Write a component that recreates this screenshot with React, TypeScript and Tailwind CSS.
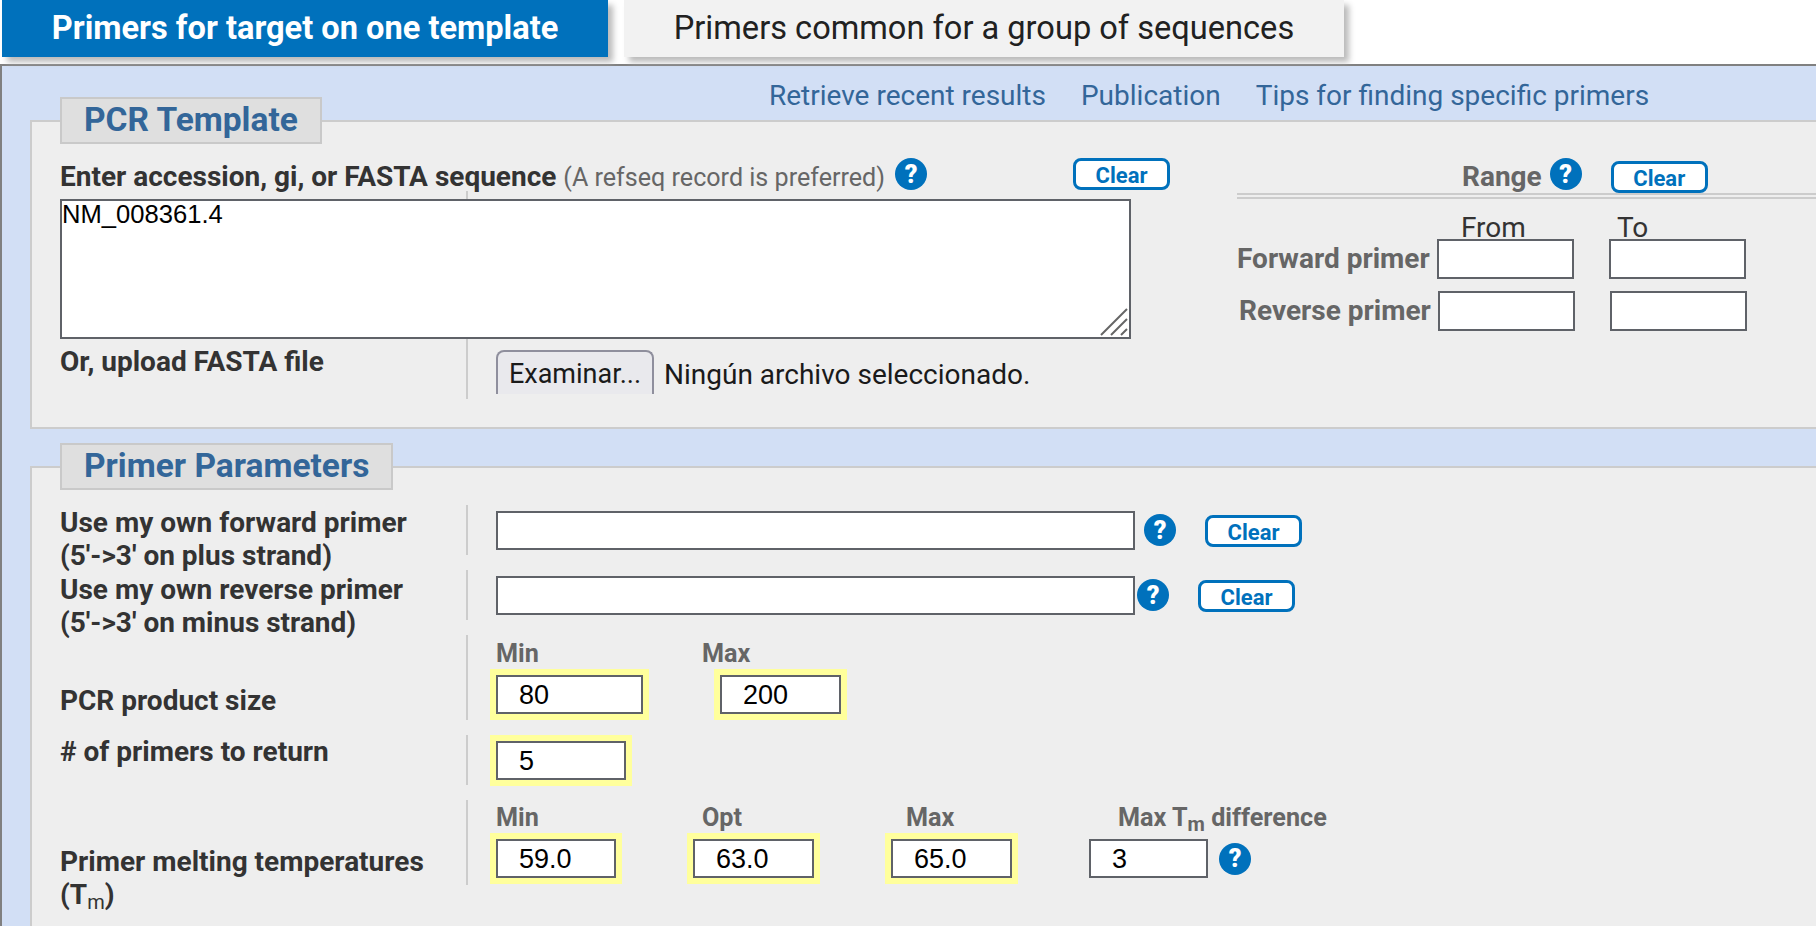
const HelpIcon = ({ className = "" }: { className?: string }) => (
  <span
    className={`inline-flex w-[32px] h-[32px] shrink-0 items-center justify-center rounded-full bg-[#0071bc] text-white text-[25px] font-black leading-none ${className}`}
  >
    ?
  </span>
);

const ClearButton = ({ className = "" }: { className?: string }) => (
  <button
    className={`w-[97px] h-[32px] shrink-0 flex items-center justify-center rounded-[8px] border-[3px] border-[#0071bc] bg-white pt-[2px] text-[#0071bc] text-[22px] font-bold ${className}`}
  >
    Clear
  </button>
);

const Field = ({ value, className = "" }: { value?: string; className?: string }) => (
  <input
    defaultValue={value}
    className={`h-[39px] border-2 border-[#5f6268] bg-white pl-[21px] pt-[2px] text-[27px] text-black font-['Liberation_Sans',sans-serif] outline-none ${className}`}
  />
);

const Required = ({ value, width, className = "" }: { value: string; width: string; className?: string }) => (
  <div className={`p-[6px] bg-[#ffff9c] w-fit ${className}`}>
    <Field value={value} className={width} />
  </div>
);

const Row = ({
  label,
  height,
  children,
}: {
  label: React.ReactNode;
  height: string;
  children: React.ReactNode;
}) => (
  <div className={`flex ${height}`}>
    <div className="w-[406px] shrink-0 text-[28px] font-bold leading-[33px] text-[#333]">{label}</div>
    <div className="relative border-l-2 border-[#cccccc] pl-[28px] grow">{children}</div>
  </div>
);

const Heading = ({ children, className = "" }: { children: React.ReactNode; className?: string }) => (
  <div className={`absolute text-[25.2px] font-bold leading-[30px] text-[#666] ${className}`}>{children}</div>
);

const Legend = ({ children }: { children: React.ReactNode }) => (
  <legend className="ml-[28px] h-[47px] flex items-center bg-[#dfdfdf] border-2 border-[#c9c9c9] px-[22px] text-[33.5px] font-bold text-[#336699]">
    {children}
  </legend>
);

export default function App() {
  return (
    <div className="h-[926px] overflow-hidden bg-white font-['Roboto',sans-serif]">
      <div className="flex h-[64px] pl-[2px] gap-[16px]">
        <div className="w-[606px] h-[57px] flex items-center justify-center bg-[#0071bc] text-white text-[32.6px] font-bold shadow-[5px_5px_6px_#bbbbbb]">
          Primers for target on one template
        </div>
        <div className="w-[720px] h-[57px] flex items-center justify-center bg-[#f2f2f2] text-[#212121] text-[32.6px] shadow-[5px_5px_6px_#bbbbbb]">
          Primers common for a group of sequences
        </div>
      </div>

      <div className="h-[862px] border-t-2 border-l-2 border-[#808080] bg-[#d2dff5] pl-[28px]">
        <div className="h-[31px] flex gap-[35px] pl-[739px] pt-[14px] text-[28px] leading-[32px] text-[#336699]">
          <a>Retrieve recent results</a>
          <a>Publication</a>
          <a>Tips for finding specific primers</a>
        </div>

        <fieldset className="h-[332px] border-2 border-r-0 border-[#cccccc] bg-[#eeeeee]">
          <Legend>PCR Template</Legend>
          <div className="flex">
            <div className="w-[1205px] shrink-0 pl-[28px]">
              <div className="relative h-[55px] pt-[16px]">
                <div className="text-[28px] font-bold leading-[33px] text-[#333] whitespace-nowrap">
                  Enter accession, gi, or FASTA sequence{" "}
                  <span className="font-normal text-[25.1px] text-[#666]">(A refseq record is preferred)</span>
                </div>
                <HelpIcon className="absolute left-[835px] top-[14px]" />
                <ClearButton className="absolute left-[1013px] top-[14px]" />
                <span className="absolute left-[406px] bottom-0 h-[8px] border-l-2 border-[#cccccc]" />
              </div>
              <div className="relative w-[1071px] h-[140px]">
                <textarea
                  defaultValue="NM_008361.4"
                  className="block w-full h-full resize-none border-2 border-[#5f6268] bg-white px-0 text-[25.6px] leading-[26px] text-black font-['Liberation_Sans',sans-serif] outline-none"
                />
                <svg className="absolute right-[2px] bottom-[2px]" width="30" height="30" viewBox="0 0 30 30" stroke="#666" strokeWidth="2">
                  <path d="M2 28 28 2M12 28 28 12M22 28 28 22" />
                </svg>
              </div>
              <Row label={<div className="pt-[6px]">Or, upload FASTA file</div>} height="h-[60px]">
                <div className="flex items-center pt-[10px] gap-[10px]">
                  <button className="w-[158px] h-[44px] border-2 border-b-0 border-[#8f8f9d] rounded-t-[8px] bg-[#e9e9ed] pt-[2px] text-[27px] text-[#1a1a1a] leading-[40px]">
                    Examinar...
                  </button>
                  <span className="text-[28px] text-[#1a1a1a] leading-[40px] pt-[6px]">Ningún archivo seleccionado.</span>
                </div>
              </Row>
            </div>

            <div className="grow">
              <div className="h-[49px] flex pl-[225px]">
                <span className="text-[28px] font-bold leading-[33px] text-[#666] pt-[16px]">Range</span>
                <HelpIcon className="ml-[8px] mt-[14px]" />
                <ClearButton className="ml-[29px] mt-[17px]" />
              </div>
              <div className="h-[6px] border-y-2 border-[#cccccc]" />
              <div className="flex pl-[224px] mt-[13px] h-[27px] text-[28px] leading-[32px] text-[#333]">
                <span className="w-[156px]">From</span>
                <span>To</span>
              </div>
              <div className="flex items-center h-[40px]">
                <span className="w-[200px] text-[28px] font-bold text-[#666]">Forward primer</span>
                <input className="w-[137px] h-[40px] border-2 border-[#5f6268] bg-white" />
                <input className="w-[137px] h-[40px] ml-[35px] border-2 border-[#5f6268] bg-white" />
              </div>
              <div className="flex items-center h-[40px] mt-[12px] pl-[2px]">
                <span className="w-[199px] text-[28px] font-bold text-[#666]">Reverse primer</span>
                <input className="w-[137px] h-[40px] border-2 border-[#5f6268] bg-white" />
                <input className="w-[137px] h-[40px] ml-[35px] border-2 border-[#5f6268] bg-white" />
              </div>
            </div>
          </div>
        </fieldset>

        <fieldset className="mt-[14px] border-2 border-r-0 border-[#cccccc] bg-[#eeeeee] pb-[60px]">
          <Legend>Primer Parameters</Legend>
          <div className="flex flex-col mt-[15px] pl-[28px]">
            <Row label={<div className="pt-[1px]">Use my own forward primer<br />(5'-&gt;3' on plus strand)</div>} height="h-[50px]">
              <div className="flex pt-[6px]">
                <Field className="w-[639px]" />
                <HelpIcon className="ml-[9px] mt-[3px]" />
                <ClearButton className="ml-[29px] mt-[4px]" />
              </div>
            </Row>
            <div className="h-[15px]" />
            <Row label={<div className="pt-[3px]">Use my own reverse primer<br />(5'-&gt;3' on minus strand)</div>} height="h-[50px]">
              <div className="flex pt-[6px]">
                <Field className="w-[639px]" />
                <HelpIcon className="ml-[2px] mt-[3px]" />
                <ClearButton className="ml-[29px] mt-[4px]" />
              </div>
            </Row>
            <div className="h-[15px]" />
            <Row label={<div className="pt-[49px]">PCR product size</div>} height="h-[85px]">
              <Heading className="left-[28px] top-[4px]">Min</Heading>
              <Heading className="left-[234px] top-[4px]">Max</Heading>
              <div className="flex pt-[34px] -ml-[6px]">
                <Required value="80" width="w-[147px]" />
                <Required value="200" width="w-[121px]" className="ml-[65px]" />
              </div>
            </Row>
            <div className="h-[15px]" />
            <Row label={<div>&#35; of primers to return</div>} height="h-[50px]">
              <Required value="5" width="w-[130px]" className="-ml-[6px]" />
            </Row>
            <div className="h-[15px]" />
            <Row
              label={
                <div className="pt-[45px]">
                  Primer melting temperatures
                  <br />
                  (T<sub className="font-normal text-[20px]">m</sub>)
                </div>
              }
              height="h-[85px]"
            >
              <Heading className="left-[28px] top-[3px]">Min</Heading>
              <Heading className="left-[234px] top-[3px]">Opt</Heading>
              <Heading className="left-[438px] top-[3px]">Max</Heading>
              <Heading className="left-[650px] top-[3px] whitespace-nowrap">
                Max T<sub className="text-[20px]">m</sub> difference
              </Heading>
              <div className="flex items-center pt-[33px] -ml-[6px]">
                <Required value="59.0" width="w-[120px]" />
                <Required value="63.0" width="w-[121px]" className="ml-[65px]" />
                <Required value="65.0" width="w-[121px]" className="ml-[65px]" />
                <Field value="3" className="w-[119px] ml-[71px]" />
                <HelpIcon className="ml-[11px]" />
              </div>
            </Row>
          </div>
        </fieldset>
      </div>
    </div>
  );
}
